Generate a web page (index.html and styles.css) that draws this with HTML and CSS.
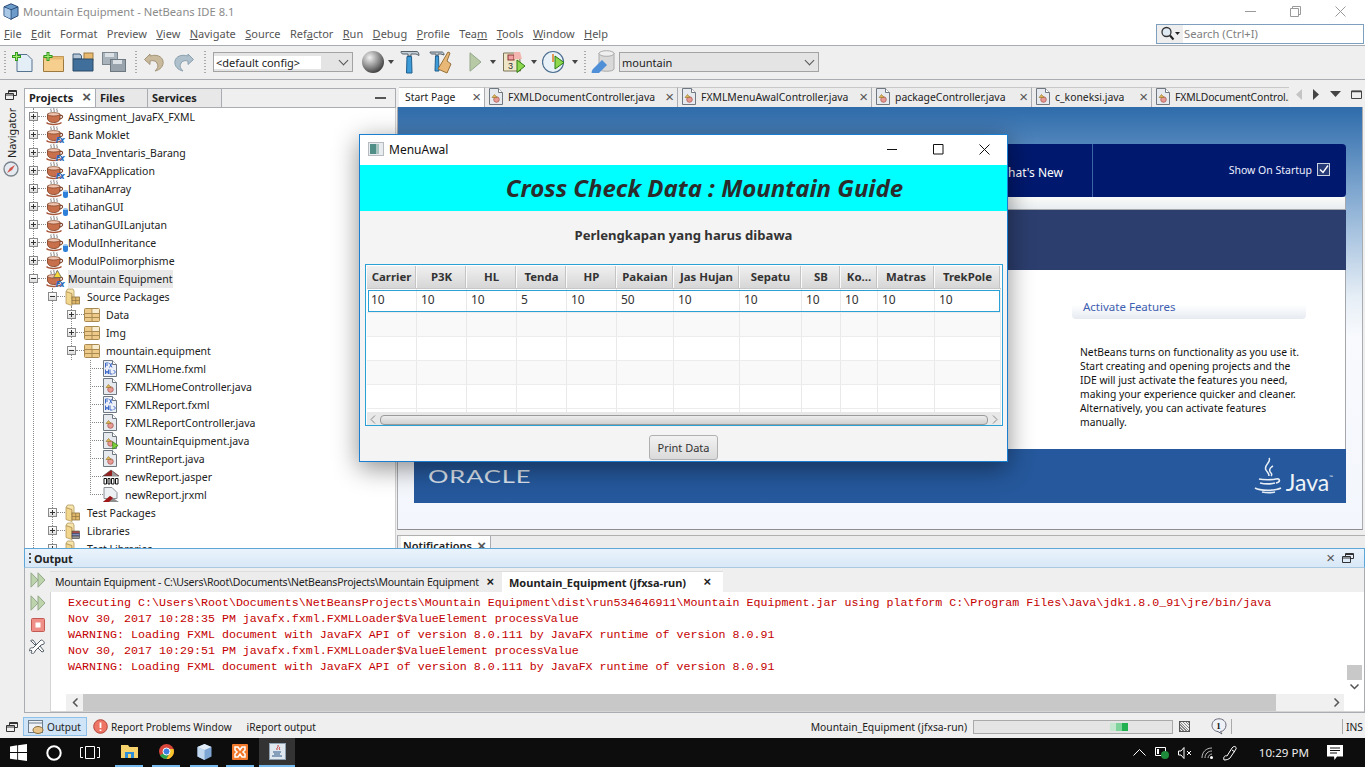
FILE: index.html
```html
<!DOCTYPE html>
<html lang="en">
<head>
  <meta charset="UTF-8" />
  <title>Mountain Equipment - NetBeans IDE 8.1</title>
  <link rel="stylesheet" href="styles.css">
</head>
<body>

  <!-- shared icons -->
  <svg class="defs" width="0" height="0" aria-hidden="true">
    <symbol id="i-cup" viewBox="0 0 18 18">
      <path d="M5 .5c-1 1 1 2 0 3.500M8 0c-1 1 1 2.500 0 4M11 .5c-1 1 1 2 0 3.500" fill="none" stroke="#6f6f6f" stroke-width=".9"/>
      <path d="M1.500 6h12.500v4c0 3-2.800 4.500-6.200 4.500S1.500 13 1.500 10z" fill="#c8704c" stroke="#7e4328" stroke-width=".9"/>
      <ellipse cx="7.700" cy="6.300" rx="6.200" ry="1.700" fill="#f0c4ae" stroke="#7e4328" stroke-width=".7"/>
      <path d="M14 7.500c2.500-.6 3.500 1.200 1.800 2.600-.8.6-1.600.9-2.600 1.200" fill="none" stroke="#7e4328" stroke-width="1.100"/>
      <path d="M.5 14.500c2 2.500 12 2.500 15 0" fill="none" stroke="#a8583a" stroke-width="1.500"/>
    </symbol>
    <symbol id="i-package" viewBox="0 0 16 16">
      <rect x=".5" y="1.500" width="15" height="13" rx="1" fill="#edc98a" stroke="#a98a50"/>
      <path d="M.5 6.500h15M.5 10.500h15M8 1.500v13" stroke="#a98a50" fill="none"/>
      <rect x="8.500" y="2" width="6.500" height="4" fill="#f8ecd0"/>
    </symbol>
    <symbol id="i-folder" viewBox="0 0 16 18">
      <path d="M1 3.500V15.500l6 2V5.500z" fill="#f2d68c" stroke="#b4975a" stroke-width=".8"/>
      <path d="M1 3.500l1.500-2.500h5.500l1 2v8H7V5.500z" fill="#f7e5ae" stroke="#b4975a" stroke-width=".8"/>
      <rect x="7" y="9" width="7.500" height="7" fill="#e0b76a" stroke="#8d7340" stroke-width=".8"/>
      <path d="M7 12.500h7.500M10.700 9v7" stroke="#8d7340" stroke-width=".7"/>
    </symbol>
    <symbol id="i-libs" viewBox="0 0 16 18">
      <path d="M1 3.500V15.500l6 2V5.500z" fill="#f2d68c" stroke="#b4975a" stroke-width=".8"/>
      <path d="M1 3.500l1.500-2.500h5.500l1 2v8H7V5.500z" fill="#f7e5ae" stroke="#b4975a" stroke-width=".8"/>
      <rect x="7" y="9" width="7.500" height="2.500" fill="#a45050" stroke="#553"  stroke-width=".6"/>
      <rect x="7" y="11.500" width="7.500" height="2.500" fill="#8090c0" stroke="#335" stroke-width=".6"/>
      <rect x="7" y="14" width="7.500" height="2.500" fill="#999" stroke="#333" stroke-width=".6"/>
    </symbol>
    <symbol id="i-java" viewBox="0 0 14 17">
      <path d="M.5.500h9l4 4v12H.5z" fill="#e6eaef" stroke="#6f7780"/>
      <path d="M9.500.500v4h4" fill="#fff" stroke="#6f7780"/>
      <circle cx="7.500" cy="11.500" r="2.800" fill="#e79a93" stroke="#a0524c" stroke-width=".7"/>
      <path d="M3 9.500l2.500-3 2.500 3z" fill="#e5b85c" stroke="#8f6f24" stroke-width=".6"/>
    </symbol>
    <symbol id="i-fxml" viewBox="0 0 14 17">
      <path d="M.5.500h9l4 4v12H.5z" fill="#edf0f6" stroke="#6f7780"/>
      <path d="M9.500.500v4h4" fill="#fff" stroke="#6f7780"/>
      <path d="M2.500 3v4.500M2.500 3h3M2.500 5h2.500M6.500 3l2.500 4.500M9 3L6.500 7.500M2.500 9.500v4.500l1.500-3 1.500 3v-4.500M7 9.500v4.500h2.500M10.500 10l2 2-2 2" fill="none" stroke="#2f5fc4" stroke-width=".9"/>
    </symbol>
    <symbol id="i-run" viewBox="0 0 8 10">
      <path d="M.8.800l6.200 4.200-6.200 4.200z" fill="#7ed03a" stroke="#2e7d12" stroke-width=".8"/>
    </symbol>
    <symbol id="i-restore" viewBox="0 0 12 10">
      <path d="M3.500 3V.500h8v5h-3M.500 3.500h8v6h-8z" fill="none" stroke="#333" stroke-width="1"/>
      <path d="M.500 5h8M3.500 1.500h8" stroke="#333" stroke-width="1"/>
    </symbol>
    <symbol id="i-ffwd" viewBox="0 0 16 16">
      <path d="M1 .800l7 7.200-7 7.200zM8 .800l7 7.200-7 7.200z" fill="#bdd3ab" stroke="#93a98a"/>
    </symbol>
  </svg>

  <!-- IDE TITLE BAR -->
  <header class="title-bar">
    <svg class="app-cube" width="16" height="17" viewBox="0 0 16 17">
      <path d="M8 .800l7 3v9l-7 3.400-7-3.400v-9z" fill="#6d9ccb" stroke="#2b4d78"/>
      <path d="M1 3.800l7 3 7-3M8 6.800v10" fill="none" stroke="#2b4d78"/>
      <path d="M1.500 4.500L7.500 7v8.800l-6-3z" fill="#a9c8e6"/>
    </svg>
    <span class="title-text">Mountain Equipment - NetBeans IDE 8.1</span>
    <div class="win-controls">
      <svg width="11" height="11" viewBox="0 0 11 11"><path d="M0 5.500h11" stroke="#9a9a9a"/></svg>
      <svg width="11" height="11" viewBox="0 0 11 11"><path d="M.5 2.500h8v8h-8zM2.500 2.500v-2h8v8h-2" fill="none" stroke="#9a9a9a"/></svg>
      <svg width="11" height="11" viewBox="0 0 11 11"><path d="M.5.500l10 10M10.500.500l-10 10" stroke="#9a9a9a"/></svg>
    </div>
  </header>

  <!-- MENU -->
  <nav class="menu-bar">
    <a class="menu-item"><u>F</u>ile</a>
    <a class="menu-item"><u>E</u>dit</a>
    <a class="menu-item">Format</a>
    <a class="menu-item">Preview</a>
    <a class="menu-item"><u>V</u>iew</a>
    <a class="menu-item"><u>N</u>avigate</a>
    <a class="menu-item"><u>S</u>ource</a>
    <a class="menu-item">Ref<u>a</u>ctor</a>
    <a class="menu-item"><u>R</u>un</a>
    <a class="menu-item"><u>D</u>ebug</a>
    <a class="menu-item"><u>P</u>rofile</a>
    <a class="menu-item">Tea<u>m</u></a>
    <a class="menu-item"><u>T</u>ools</a>
    <a class="menu-item"><u>W</u>indow</a>
    <a class="menu-item"><u>H</u>elp</a>
    <div class="quick-search">
      <span class="search-btn">
        <svg width="20" height="16" viewBox="0 0 20 16">
          <circle cx="6.500" cy="6" r="4.500" fill="#dfe9f2" stroke="#333" stroke-width="1.300"/>
          <path d="M10 9.500l3.500 4" stroke="#222" stroke-width="2"/>
          <path d="M15 6h5l-2.500 3z" fill="#222"/>
        </svg>
      </span>
      <span class="search-text">Search (Ctrl+I)</span>
    </div>
  </nav>

  <!-- TOOLBAR -->
  <div class="tool-bar">
    <span class="tb-grip"></span>
    <svg class="tb-icon" width="22" height="22" viewBox="0 0 22 22">
      <path d="M5 3.500h10l5 5v12H5z" fill="#e4eef7" stroke="#56738f"/>
      <path d="M4.500 1v9M0 5.500h9" stroke="#2f9a1e" stroke-width="3"/>
      <path d="M4.500 2v7M1 5.500h7" stroke="#a4e86e" stroke-width="1.200"/>
    </svg>
    <svg class="tb-icon" width="22" height="22" viewBox="0 0 22 22">
      <path d="M1.500 5.500h20v15h-20z" fill="#f6cf8f" stroke="#9c7a3f"/>
      <path d="M1.500 5.500h20v3h-20z" fill="#e8b970"/>
      <path d="M6 1v9M1.500 5.500h9" stroke="#2f9a1e" stroke-width="3"/>
      <path d="M6 2v7M2.500 5.500h7" stroke="#a4e86e" stroke-width="1.200"/>
    </svg>
    <svg class="tb-icon" width="22" height="22" viewBox="0 0 22 22">
      <path d="M1 8V3h7l1.500 2V8z" fill="#b5c6d6" stroke="#3f5d7a"/>
      <rect x="12" y="2" width="9" height="7" fill="#e8b970" stroke="#9c7a3f"/>
      <path d="M1 8h20v12H1z" fill="#3f6f9a" stroke="#2b4a68"/>
    </svg>
    <svg class="tb-icon tb-icon--save" width="24" height="22" viewBox="0 0 24 22">
      <rect x=".5" y="1.500" width="15" height="12" fill="#a9b3bb" stroke="#7c868e"/>
      <rect x="3" y="2" width="9" height="4" fill="#dbe1e5"/>
      <rect x="8.500" y="8.500" width="15" height="12" fill="#98a3ac" stroke="#6d7880"/>
      <rect x="11" y="9" width="9" height="4" fill="#dbe1e5"/>
    </svg>
    <span class="tb-grip"></span>
    <svg class="tb-icon" width="22" height="22" viewBox="0 0 22 22">
      <path d="M7 3L1.500 8.500 7 13.500V10c4-1 7 0 8 5-.5 2-1.500 3.500-3 5 5-1 9-5 8-10-1-4.500-6-7-13-5z" fill="#c9b99d" stroke="#a49579"/>
    </svg>
    <svg class="tb-icon" width="22" height="22" viewBox="0 0 22 22">
      <path d="M15 3l5.500 5.500L15 13.500V10c-4-1-7 0-8 5 .5 2 1.500 3.500 3 5-5-1-9-5-8-10 1-4.500 6-7 13-5z" fill="#aec0cc" stroke="#8ba0ae"/>
    </svg>
    <span class="tb-grip tb-grip--combo"></span>
    <div class="combo combo--config"><span class="combo-value">&lt;default config&gt;</span><span class="combo-arrow"></span></div>
    <svg class="tb-globe" width="27" height="26" viewBox="0 0 27 26">
      <defs><radialGradient id="globe-fill" cx=".35" cy=".3" r=".8"><stop offset="0" stop-color="#f2f2f2"/><stop offset=".55" stop-color="#8a8a8a"/><stop offset="1" stop-color="#2f2f2f"/></radialGradient></defs>
      <circle cx="12" cy="13" r="11" fill="url(#globe-fill)"/>
    </svg>
    <span class="tb-drop"></span>
    <svg class="tb-icon tb-icon--hammer" width="20" height="26" viewBox="0 0 20 26">
      <path d="M1 2.500h16c1 0 2 2 2 4l-3-1.500H11v2H8V5H3c-1.500 0-2-1.500-2-2.500z" fill="#c4cdd3" stroke="#56636c"/>
      <path d="M7 7.500h4.500L12 24H6.500z" fill="#3d9bd8" stroke="#1f5f8f"/>
    </svg>
    <svg class="tb-icon tb-icon--clean" width="25" height="26" viewBox="0 0 25 26">
      <path d="M1 3h12c1 0 2 1 2 3l-3-1H9v2H7V5H3C2 5 1 4 1 3z" fill="#c4cdd3" stroke="#56636c"/>
      <path d="M6.500 7h3l.5 15H6z" fill="#3d9bd8" stroke="#1f5f8f"/>
      <path d="M19 3l2 1-3 8 4 3-4 9-9-4 3-5z" fill="#e9b877" stroke="#97703a"/>
    </svg>
    <svg class="tb-icon tb-icon--run" width="13" height="20" viewBox="0 0 13 20">
      <path d="M1 .800l11 9.200-11 9.200z" fill="#b8c9a6" stroke="#94a88a"/>
    </svg>
    <span class="tb-drop"></span>
    <svg class="tb-icon tb-icon--debug" width="23" height="24" viewBox="0 0 23 24">
      <path d="M.5 3h16l1 18H.5z" fill="#efe6c8" stroke="#7b7558"/>
      <rect x="5" y="5" width="6" height="5" fill="#f0a0a0" stroke="#833"/>
      <text class="tb-three" x="5" y="19">3</text>
      <path d="M11 2h6l2 7h-8z" fill="#f3b5b0"/>
      <path d="M14 10l8 6-8 6.500z" fill="#8ed850" stroke="#2e7d12"/>
    </svg>
    <span class="tb-drop"></span>
    <svg class="tb-icon tb-icon--profile" width="23" height="24" viewBox="0 0 23 24">
      <circle cx="11" cy="12" r="10.500" fill="#e8f0f8" stroke="#4b6d8f" stroke-width="1.200"/>
      <path d="M11 4v8" stroke="#e07b20" stroke-width="1.500"/>
      <path d="M13 6l9 6.500-9 6.500z" fill="#8ed850" stroke="#2e7d12"/>
    </svg>
    <span class="tb-drop"></span>
    <span class="tb-grip tb-grip--db"></span>
    <svg class="tb-icon tb-icon--db" width="24" height="24" viewBox="0 0 24 24">
      <path d="M8 3v16c0 3 15 3 15 0V3z" fill="#d9d9d9" stroke="#aaa"/>
      <ellipse cx="15.500" cy="3.500" rx="7.500" ry="2.800" fill="#efefef" stroke="#aaa"/>
      <path d="M11 10l5 5-8 8-7 0c-1 0 0-3 1-4l5-5z" fill="#4f8fd8"/>
    </svg>
    <div class="combo combo--db"><span class="combo-value">mountain</span><span class="combo-arrow"></span></div>
  </div>

  <!-- WORKSPACE -->
  <main class="workspace">

    <aside class="nav-strip">
      <svg width="12" height="10"><use href="#i-restore"/></svg>
      <span class="nav-strip-label">Navigator</span>
      <svg class="nav-compass" width="16" height="16" viewBox="0 0 16 16">
        <circle cx="8" cy="8" r="7" fill="#e4eaf0" stroke="#7a838c" stroke-width="1.300"/>
        <path d="M4 12l3-5 5-3-3 5z" fill="#d2554a"/>
      </svg>
    </aside>

    <section class="projects">
      <div class="view-tabs">
        <span class="view-tab view-tab--active">Projects <i class="close-x">&times;</i></span>
        <span class="view-tab view-tab--files">Files</span>
        <span class="view-tab view-tab--services">Services</span>
        <span class="view-min"></span>
      </div>
      <div class="tree">
        <span class="guide guide-1"></span>
        <span class="guide guide-2"></span>
        <span class="guide guide-3"></span>
        <span class="guide guide-4"></span>

        <div class="row l1"><span class="exp"></span><span class="conn"></span><span class="ico"><svg width="18" height="18"><use href="#i-cup"/></svg></span>Assingment_JavaFX_FXML</div>
        <div class="row l1"><span class="exp"></span><span class="conn"></span><span class="ico"><svg width="18" height="18"><use href="#i-cup"/></svg><b class="fx">Fx</b></span>Bank Moklet</div>
        <div class="row l1"><span class="exp"></span><span class="conn"></span><span class="ico"><svg width="18" height="18"><use href="#i-cup"/></svg><b class="fx">Fx</b></span>Data_Inventaris_Barang</div>
        <div class="row l1"><span class="exp"></span><span class="conn"></span><span class="ico"><svg width="18" height="18"><use href="#i-cup"/></svg><b class="fx">Fx</b></span>JavaFXApplication</div>
        <div class="row l1"><span class="exp"></span><span class="conn"></span><span class="ico"><svg width="18" height="18"><use href="#i-cup"/></svg><i class="can"></i></span>LatihanArray</div>
        <div class="row l1"><span class="exp"></span><span class="conn"></span><span class="ico"><svg width="18" height="18"><use href="#i-cup"/></svg><i class="can"></i></span>LatihanGUI</div>
        <div class="row l1"><span class="exp"></span><span class="conn"></span><span class="ico"><svg width="18" height="18"><use href="#i-cup"/></svg></span>LatihanGUILanjutan</div>
        <div class="row l1"><span class="exp"></span><span class="conn"></span><span class="ico"><svg width="18" height="18"><use href="#i-cup"/></svg><i class="can"></i></span>ModulInheritance</div>
        <div class="row l1"><span class="exp"></span><span class="conn"></span><span class="ico"><svg width="18" height="18"><use href="#i-cup"/></svg></span>ModulPolimorphisme</div>
        <div class="row l1"><span class="exp exp--open"></span><span class="conn"></span><span class="ico"><svg width="18" height="18"><use href="#i-cup"/></svg><b class="fx">Fx</b><svg class="warn" width="9" height="8" viewBox="0 0 9 8"><path d="M4.500.500l4 7h-8z" fill="#f6d73c" stroke="#555" stroke-width=".7"/></svg></span><span class="selected">Mountain Equipment</span></div>
        <div class="row l2"><span class="exp exp--open"></span><span class="conn"></span><span class="ico"><svg width="16" height="18"><use href="#i-folder"/></svg></span>Source Packages</div>
        <div class="row l3"><span class="exp"></span><span class="conn"></span><span class="ico"><svg width="16" height="16"><use href="#i-package"/></svg></span>Data</div>
        <div class="row l3"><span class="exp"></span><span class="conn"></span><span class="ico"><svg width="16" height="16"><use href="#i-package"/></svg></span>Img</div>
        <div class="row l3"><span class="exp exp--open"></span><span class="conn"></span><span class="ico"><svg width="16" height="16"><use href="#i-package"/></svg></span>mountain.equipment</div>
        <div class="row l4"><span class="conn"></span><span class="ico"><svg width="14" height="17"><use href="#i-fxml"/></svg></span>FXMLHome.fxml</div>
        <div class="row l4"><span class="conn"></span><span class="ico"><svg width="14" height="17"><use href="#i-java"/></svg></span>FXMLHomeController.java</div>
        <div class="row l4"><span class="conn"></span><span class="ico"><svg width="14" height="17"><use href="#i-fxml"/></svg></span>FXMLReport.fxml</div>
        <div class="row l4"><span class="conn"></span><span class="ico"><svg width="14" height="17"><use href="#i-java"/></svg></span>FXMLReportController.java</div>
        <div class="row l4"><span class="conn"></span><span class="ico"><svg width="14" height="17"><use href="#i-java"/></svg><svg class="run-badge" width="7" height="9"><use href="#i-run"/></svg></span>MountainEquipment.java</div>
        <div class="row l4"><span class="conn"></span><span class="ico"><svg width="14" height="17"><use href="#i-java"/></svg></span>PrintReport.java</div>
        <div class="row l4"><span class="conn"></span><span class="ico">
          <svg width="16" height="16" viewBox="0 0 16 16"><path d="M0 7L8 1l8 6z" fill="#9a2020" stroke="#444" stroke-width=".6"/><path d="M9 2l6 5H9z" fill="#999"/><path d="M1 9.500h2.500V15H1zM5 9.500h2V15H5zM8.500 9.500h2.500V15H8.500zM12.500 9.500H15V15h-2.500z" fill="#fff" stroke="#111"/></svg>
        </span>newReport.jasper</div>
        <div class="row l4"><span class="conn"></span><span class="ico">
          <svg width="16" height="16" viewBox="0 0 16 16"><path d="M1 .500h8l5 5v6H1z" fill="#eef1f4" stroke="#8a8f94"/><path d="M0 15l7-6 3 2 6 4z" fill="#8e8e8e"/><path d="M0 15l7-6 3 2-4 4z" fill="#a01818"/></svg>
        </span>newReport.jrxml</div>
        <div class="row l2"><span class="exp"></span><span class="conn"></span><span class="ico"><svg width="16" height="18"><use href="#i-folder"/></svg></span>Test Packages</div>
        <div class="row l2"><span class="exp"></span><span class="conn"></span><span class="ico"><svg width="16" height="18"><use href="#i-libs"/></svg></span>Libraries</div>
        <div class="row l2"><span class="exp"></span><span class="conn"></span><span class="ico"><svg width="16" height="18"><use href="#i-libs"/></svg></span>Test Libraries</div>
      </div>
    </section>

    <section class="editor">
      <div class="doc-tabs">
        <span class="doc-tab doc-tab--start">Start Page<i class="close-x">&times;</i></span>
        <span class="doc-tab doc-tab--a"><svg width="14" height="17"><use href="#i-java"/></svg>FXMLDocumentController.java<i class="close-x">&times;</i></span>
        <span class="doc-tab doc-tab--b"><svg width="14" height="17"><use href="#i-java"/></svg>FXMLMenuAwalController.java<i class="close-x">&times;</i></span>
        <span class="doc-tab doc-tab--c"><svg width="14" height="17"><use href="#i-java"/></svg>packageController.java<i class="close-x">&times;</i></span>
        <span class="doc-tab doc-tab--d"><svg width="14" height="17"><use href="#i-java"/></svg>c_koneksi.java<i class="close-x">&times;</i></span>
        <span class="doc-tab doc-tab--e"><svg width="14" height="17"><use href="#i-java"/></svg>FXMLDocumentControl..</span>
        <div class="doc-nav">
          <svg width="7" height="11" viewBox="0 0 7 11"><path d="M6 0v11L0 5.500z" fill="#c4c4c4"/></svg>
          <svg width="7" height="11" viewBox="0 0 7 11"><path d="M0 0v11l6-5.500z" fill="#444"/></svg>
          <svg width="11" height="7" viewBox="0 0 11 7"><path d="M0 0h11L5.500 6z" fill="#444"/></svg>
          <svg width="11" height="9" viewBox="0 0 11 9"><path d="M.5 1h10v7.500H.5z" fill="none" stroke="#444"/><path d="M.5 1.500h10" stroke="#444" stroke-width="1.500"/></svg>
        </div>
      </div>

      <div class="start-page">
        <div class="sp-nav">
          <div class="sp-nav-tabs"><span>What's New</span></div>
          <label class="sp-startup">Show On Startup <span class="sp-check">
            <svg width="10" height="9" viewBox="0 0 10 9"><path d="M1 4.500l3 3 5-7" fill="none" stroke="#fff" stroke-width="1.400"/></svg>
          </span></label>
        </div>
        <div class="sp-strip"></div>
        <div class="sp-band"></div>
        <div class="sp-content">
          <div class="sp-feature">
            <h4 class="sp-feature-title">Activate Features</h4>
            <p class="sp-feature-text">NetBeans turns on functionality as you use it.<br>Start creating and opening projects and the<br>IDE will just activate the features you need,<br>making your experience quicker and cleaner.<br>Alternatively, you can activate features<br>manually.</p>
          </div>
        </div>
        <div class="sp-footer">
          <span class="oracle">ORACLE</span>
          <div class="java-logo">
            <svg width="28" height="38" viewBox="0 0 28 38">
              <path d="M15 1c3 4-6 7-3 12 1 2 3 3 3 6M19 9c-4 2-4 5-2 7 1 1 1 2 0 3" fill="none" stroke="#e6edf5" stroke-width="1.500"/>
              <path d="M5 22c4 1 13 1 17 0M6 26c4 1 11 1 15 0M22 22c4-1 5 3 0 4M1 31c5 3 20 3 26 0M8 35c5 1 9 1 13 0" fill="none" stroke="#e6edf5" stroke-width="1.700"/>
            </svg>
            <span class="java-word">Java<sup>™</sup></span>
          </div>
        </div>
      </div>

      <div class="notif-strip">
        <span class="notif-tab">Notifications <i class="close-x">&times;</i></span>
      </div>
    </section>
  </main>

  <!-- OUTPUT -->
  <section class="output">
    <div class="output-head">
      <span class="grip"></span>
      <strong>Output</strong>
      <div class="output-head-btns">
        <i class="close-x">&times;</i>
        <svg width="12" height="10"><use href="#i-restore"/></svg>
      </div>
    </div>
    <div class="output-body">
      <div class="output-actions">
        <svg width="16" height="16"><use href="#i-ffwd"/></svg>
        <svg width="16" height="16"><use href="#i-ffwd"/></svg>
        <svg width="14" height="14" viewBox="0 0 14 14"><rect x=".5" y=".5" width="13" height="13" rx="1" fill="#ef8f88" stroke="#c05a52"/><rect x="4.500" y="4.500" width="5" height="5" fill="#fff"/></svg>
        <svg width="17" height="16" viewBox="0 0 17 16"><path d="M2 2l4 4 1-1-3-4c-2 0-3 1-2 1zM9 9l4 4 2-1-4-5zM12 1c2 0 4 2 3 4l-3 1-6 6c0 2-2 3-4 2l1-2-1-1-2 1c0-2 2-4 4-3l6-6z" fill="#fff" stroke="#55606a"/></svg>
      </div>
      <div class="output-main">
        <div class="out-tabs">
          <span class="out-tab"><span class="out-tab-path">Mountain Equipment - C:\Users\Root\Documents\NetBeansProjects\Mountain Equipment</span> <i class="close-x close-x--bold">&times;</i></span>
          <span class="out-tab out-tab--active">Mountain_Equipment (jfxsa-run) <i class="close-x close-x--bold">&times;</i></span>
        </div>
        <div class="console">
          <pre class="console-text">Executing C:\Users\Root\Documents\NetBeansProjects\Mountain Equipment\dist\run534646911\Mountain Equipment.jar using platform C:\Program Files\Java\jdk1.8.0_91\jre/bin/java
Nov 30, 2017 10:28:35 PM javafx.fxml.FXMLLoader$ValueElement processValue
WARNING: Loading FXML document with JavaFX API of version 8.0.111 by JavaFX runtime of version 8.0.91
Nov 30, 2017 10:29:51 PM javafx.fxml.FXMLLoader$ValueElement processValue
WARNING: Loading FXML document with JavaFX API of version 8.0.111 by JavaFX runtime of version 8.0.91</pre>
          <div class="vscroll">
            <span class="vscroll-thumb"></span>
            <svg class="chev" width="9" height="6" viewBox="0 0 9 6"><path d="M.5.500l4 4 4-4" fill="none" stroke="#555" stroke-width="1.500"/></svg>
          </div>
          <div class="hscroll">
            <svg class="chev" width="6" height="9" viewBox="0 0 6 9"><path d="M5.500.500l-4 4 4 4" fill="none" stroke="#555" stroke-width="1.500"/></svg>
            <span class="hscroll-track"><span class="hscroll-thumb"></span></span>
            <svg class="chev" width="6" height="9" viewBox="0 0 6 9"><path d="M.5.500l4 4-4 4" fill="none" stroke="#555" stroke-width="1.500"/></svg>
          </div>
        </div>
      </div>
    </div>
  </section>

  <!-- STATUS -->
  <footer class="status-bar">
    <svg class="status-restore" width="12" height="10"><use href="#i-restore"/></svg>
    <span class="dock-btn dock-btn--on">
      <svg width="16" height="16" viewBox="0 0 16 16"><rect x=".5" y="1.500" width="14" height="12" fill="#eef2f6" stroke="#6b7c8c"/><path d="M.5 4h14" stroke="#6b7c8c"/><ellipse cx="10" cy="11" rx="5" ry="3.500" fill="#e6c48a" stroke="#8a6a3a"/></svg>
      Output
    </span>
    <span class="dock-btn">
      <svg width="15" height="15" viewBox="0 0 15 15"><circle cx="7.500" cy="7.500" r="6.800" fill="#ee7466" stroke="#b2453a"/><path d="M7.500 3.500v5.500M7.500 10.500v1.500" stroke="#fff" stroke-width="1.800"/></svg>
      Report Problems Window
    </span>
    <span class="dock-btn dock-btn--plain">iReport output</span>
    <div class="status-right">
      <span class="task-name">Mountain_Equipment (jfxsa-run)</span>
      <span class="progress"><i class="p1"></i><i class="p2"></i><i class="p3"></i></span>
      <span class="progress-stop"></span>
      <svg class="bubble" width="16" height="17" viewBox="0 0 16 17"><path d="M8 .800c4 0 7 2.700 7 6.400 0 3.500-2.500 6-5.500 6.400L11 16l-4-2.400C3.500 13.200 1 10.700 1 7.200 1 3.500 4 .800 8 .800z" fill="#eef2f6" stroke="#667"/><text class="bubble-num" x="5.200" y="11">1</text></svg>
      <span class="status-sep"></span>
      <span class="status-sep status-sep--ins"></span>
      <span class="ins">INS</span>
    </div>
  </footer>

  <!-- WINDOWS TASKBAR -->
  <div class="taskbar">
    <svg class="tk-start" width="17" height="17" viewBox="0 0 17 17"><path d="M0 2.400L7.200 1.300v6.800H0zM8.100 1.200L17 0v8.100H8.100zM0 9h7.200v6.800L0 14.700zM8.100 9H17v8L8.100 15.800z" fill="#fff"/></svg>
    <svg class="tk-cortana" width="16" height="16" viewBox="0 0 16 16"><circle cx="8" cy="8" r="6.700" fill="none" stroke="#fff" stroke-width="2"/></svg>
    <svg class="tk-view" width="20" height="13" viewBox="0 0 20 13"><path d="M5.500.500h9v12h-9zM3 1.500H.500v10H3M17 1.500h2.500v10H17" fill="none" stroke="#fff"/></svg>
    <span class="tk-app tk-app--run tk-app--explorer">
      <svg width="17" height="15" viewBox="0 0 17 15"><path d="M0 1h7l1.500 2H17v11H0z" fill="#f6d36c"/><path d="M4 8h9v6H4z" fill="#2f8fd8"/><path d="M7 10h3v4H7z" fill="#f6d36c"/></svg>
    </span>
    <span class="tk-app tk-app--run tk-app--chrome">
      <svg width="15" height="15" viewBox="0 0 15 15"><circle cx="7.500" cy="7.500" r="7.500" fill="#d8453a"/><path d="M7.500 7.500L1 11.200A7.500 7.500 0 0 0 7.500 15L11 8z" fill="#2ea54f"/><path d="M7.500 15A7.500 7.500 0 0 0 14.500 5H7.500L11 9z" fill="#f6c52c"/><circle cx="7.500" cy="7.500" r="3.500" fill="#3d7fe0" stroke="#fff"/></svg>
    </span>
    <span class="tk-app tk-app--run tk-app--cube">
      <svg width="15" height="16" viewBox="0 0 15 16"><path d="M7.500 0l7 3v9.500l-7 3.500-7-3.500V3z" fill="#7ea6d4"/><path d="M.5 3l7 3v10l-7-3.500z" fill="#c2d8ef"/><path d="M.5 3l7-3 7 3-7 3z" fill="#e3eef9"/></svg>
    </span>
    <span class="tk-app tk-app--run tk-app--xampp">
      <svg width="16" height="16" viewBox="0 0 16 16"><rect width="16" height="16" rx="1" fill="#f0792c"/><path d="M3 3h3l2 3 2-3h3v3l-2 2 2 2v3h-3l-2-3-2 3H3v-3l2-2-2-2z" fill="none" stroke="#fff" stroke-width="1.500"/></svg>
    </span>
    <span class="tk-app tk-app--active">
      <svg width="17" height="17" viewBox="0 0 17 17"><rect x=".5" y=".5" width="16" height="16" fill="#dfe7ef" stroke="#8fa0b0"/><path d="M9 2c1 2-2 3-1 5M11 4c-1 1-1 2 0 3" fill="none" stroke="#c7332c"/><path d="M4 9h8M5 11h6M3 13h10" stroke="#2f5a8a"/></svg>
    </span>
    <div class="tray">
      <svg width="13" height="7" viewBox="0 0 13 7"><path d="M.5 6.500l6-6 6 6" fill="none" stroke="#fff"/></svg>
      <svg width="14" height="13" viewBox="0 0 14 13"><path d="M.5 1.500h10v8H.5z" fill="none" stroke="#fff"/><rect x="2" y="3" width="2" height="5" fill="#fff"/><circle cx="10" cy="9" r="4" fill="#1e8c3a"/></svg>
      <svg width="14" height="12" viewBox="0 0 14 12"><path d="M.5 4h2.500l3-3.500v11L3 8H.5zM9 4l4 4M13 4L9 8" fill="none" stroke="#fff"/></svg>
      <svg width="13" height="12" viewBox="0 0 13 12"><path d="M1 11c0-6 4-10 10-10M4 11c0-4 3-7 7-7M7 11c0-2 2-4 4-4" fill="none" stroke="#bbb"/><circle cx="10.500" cy="10.500" r="1.500" fill="#fff"/></svg>
      <svg width="15" height="16" viewBox="0 0 15 16"><path d="M1 15c-1-3 1-5 3-4l5-8c2-3 5-1 4 1l-6 9c-1 1-3 2-6 2zM9 5l3 2" fill="none" stroke="#fff"/></svg>
      <span class="tray-time">10:29 PM</span>
      <svg class="tray-note" width="16" height="15" viewBox="0 0 16 15"><path d="M0 0h16v11.500h-6L7.500 15l-.5-3.500H0z" fill="#fff"/><path d="M3 3h10M3 5.500h10M3 8h7" stroke="#111"/></svg>
    </div>
  </div>

  <!-- RUNNING APP WINDOW -->
  <div class="dialog">
    <div class="dlg-title">
      <svg width="16" height="14" viewBox="0 0 16 14"><rect x=".5" y=".5" width="15" height="13" fill="#e8ecef" stroke="#b5bbc0"/><rect x="2" y="2" width="6" height="10" fill="#4f8f88"/><rect x="8" y="2" width="3" height="10" fill="#a8c4c0"/></svg>
      <span class="dlg-title-text">MenuAwal</span>
      <div class="dlg-controls">
        <svg width="11" height="11" viewBox="0 0 11 11"><path d="M0 5.500h10" stroke="#111"/></svg>
        <svg width="11" height="11" viewBox="0 0 11 11"><path d="M.5.500h9.500v9.500H.5z" fill="none" stroke="#111"/></svg>
        <svg width="11" height="11" viewBox="0 0 11 11"><path d="M.5.500l10 10M10.500.500l-10 10" stroke="#111"/></svg>
      </div>
    </div>
    <h1 class="dlg-banner">Cross Check Data : Mountain Guide</h1>
    <h2 class="dlg-sub">Perlengkapan yang harus dibawa</h2>
    <div class="tv">
      <div class="tv-row tv-head">
        <span>Carrier</span><span>P3K</span><span>HL</span><span>Tenda</span><span>HP</span><span>Pakaian</span><span>Jas Hujan</span><span>Sepatu</span><span>SB</span><span>Ko...</span><span>Matras</span><span>TrekPole</span>
      </div>
      <div class="tv-row tv-data tv-focus">
        <span>10</span><span>10</span><span>10</span><span>5</span><span>10</span><span>50</span><span>10</span><span>10</span><span>10</span><span>10</span><span>10</span><span>10</span>
      </div>
      <div class="tv-row tv-data tv-odd"><span></span><span></span><span></span><span></span><span></span><span></span><span></span><span></span><span></span><span></span><span></span><span></span></div>
      <div class="tv-row tv-data"><span></span><span></span><span></span><span></span><span></span><span></span><span></span><span></span><span></span><span></span><span></span><span></span></div>
      <div class="tv-row tv-data tv-odd"><span></span><span></span><span></span><span></span><span></span><span></span><span></span><span></span><span></span><span></span><span></span><span></span></div>
      <div class="tv-row tv-data"><span></span><span></span><span></span><span></span><span></span><span></span><span></span><span></span><span></span><span></span><span></span><span></span></div>
      <div class="tv-row tv-data tv-stub"><span></span><span></span><span></span><span></span><span></span><span></span><span></span><span></span><span></span><span></span><span></span><span></span></div>
      <div class="tv-scroll">
        <svg width="6" height="9" viewBox="0 0 6 9"><path d="M5 .5l-4 4 4 4" fill="none" stroke="#888"/></svg>
        <span class="tv-thumb"></span>
        <svg width="6" height="9" viewBox="0 0 6 9"><path d="M1 .5l4 4-4 4" fill="none" stroke="#888"/></svg>
      </div>
    </div>
    <div class="dlg-actions"><button class="fx-btn">Print Data</button></div>
  </div>

</body>
</html>
```

FILE: styles.css
```css
* {
  box-sizing: border-box;
}
html, body {
  margin: 0;
  height: 100%;
}
body {
  position: relative;
  width: 1365px;
  height: 767px;
  overflow: hidden;
  display: flex;
  flex-direction: column;
  background: #efefef;
  font-family: "Noto Sans", sans-serif;
  font-size: 10.5px;
  color: #222;
}
.defs {
  position: absolute;
}
svg {
  display: block;
  flex: none;
}
.close-x {
  font-style: normal;
  font-size: 15px;
  line-height: 10px;
  color: #555;
  font-family: "Liberation Sans", sans-serif;
}

/* title + menu */
.title-bar {
  height: 22px;
  flex: none;
  display: flex;
  align-items: center;
  background: #fff;
  padding-left: 3px;
}
.title-text {
  margin-left: 4px;
  font-size: 11.2px;
  color: #8b8b8b;
}
.win-controls {
  margin-left: auto;
  display: flex;
  gap: 34px;
  padding-right: 19px;
}
.menu-bar {
  height: 24px;
  flex: none;
  display: flex;
  align-items: center;
  gap: 9.4px;
  padding: 0 1px 0 4px;
  background: #fff;
  border-bottom: 1px solid #a9adb1;
}
.menu-item {
  font-size: 11px;
  color: #555;
}
.quick-search {
  margin-left: auto;
  width: 208px;
  height: 20px;
  display: flex;
  align-items: center;
  border: 1px solid #7f9fbf;
  background: #fff;
}
.search-btn {
  width: 26px;
  height: 18px;
  display: flex;
  align-items: center;
  padding-left: 3px;
  background: #eee;
}
.search-text {
  margin-left: 1px;
  font-size: 11.2px;
  color: #808080;
}

/* toolbar */
.tool-bar {
  height: 34px;
  flex: none;
  display: flex;
  align-items: center;
  padding: 0 0 1px 4px;
  background: #efefef;
  border-bottom: 1px solid #a9adb1;
}
.tb-grip {
  width: 2px;
  height: 22px;
  margin-right: 2px;
  background: repeating-linear-gradient(#aaa 0 1px, transparent 1px 3px);
}
.tb-icon {
  margin: 0 4px;
}
.tb-icon--save {
  margin: 0 9px 0 4px;
}
.tb-grip--combo {
  margin: 0 7px 0 5px;
}
.tb-grip--db {
  margin: 0 5px 0 6px;
}
.tb-icon--hammer {
  margin: 0 9px 0 6px;
}
.tb-icon--clean {
  margin: 0 15px 0 0;
}
.tb-icon--run {
  margin: 0 8px 0 0;
}
.tb-icon--debug {
  margin: 0 5px 0 7px;
}
.tb-icon--profile {
  margin: 0 7px 0 5px;
}
.tb-icon--db {
  margin: 0 4px 0 0;
}
.tb-globe {
  margin-left: 8px;
}
.tb-drop {
  width: 0;
  height: 0;
  border: 3.500px solid transparent;
  border-top: 4px solid #444;
  border-bottom: 0;
}
.tb-three {
  font-size: 9px;
  font-family: "Liberation Sans", sans-serif;
  fill: #333;
}
.combo {
  height: 20px;
  display: flex;
  align-items: center;
  border: 1px solid #a3a3a3;
  background: #e4e4e4;
  font-size: 11px;
  color: #222;
  position: relative;
}
.combo-value {
  flex: 1;
  padding-left: 2px;
}
.combo--config {
  width: 140px;
}
.combo--config .combo-value {
  height: 13px;
  line-height: 13px;
  margin-right: 19px;
  background: #fff;
}
.combo--db {
  width: 200px;
}
.combo-arrow {
  width: 7px;
  height: 7px;
  margin: 0 5px 4px 0;
  border-right: 1px solid #555;
  border-bottom: 1px solid #555;
  transform: rotate(45deg);
}

/* workspace */
.workspace {
  height: 468px;
  flex: none;
  display: flex;
}
.nav-strip {
  width: 24px;
  flex: none;
  display: flex;
  flex-direction: column;
  align-items: center;
  padding: 10px 2px 0 0;
  gap: 8px;
}
.nav-strip-label {
  writing-mode: vertical-rl;
  transform: rotate(180deg);
  font-size: 10.8px;
  height: 46px;
  margin-top: 4px;
}
.nav-compass {
  margin-top: -5px;
}
.projects {
  width: 372px;
  flex: none;
  display: flex;
  flex-direction: column;
  border-left: 1px solid #a9adb1;
  margin-top: 8px;
}
.view-tabs {
  height: 20px;
  flex: none;
  display: flex;
  background: #efefef;
  border-top: 1px solid #a9adb1;
  border-bottom: 1px solid #a9adb1;
  border-right: 1px solid #a9adb1;
}
.view-tab {
  display: flex;
  align-items: center;
  justify-content: space-between;
  padding: 0 4px 2px;
  font-weight: 700;
  font-size: 11px;
  color: #222;
  border-right: 1px solid #a9adb1;
  background: #e8e8e8;
}
.view-tab--active {
  width: 71px;
  background: #fff;
}
.view-tab--files {
  width: 52px;
}
.view-tab--services {
  width: 74px;
}
.view-min {
  margin: 8px 9px 0 auto;
  width: 11px;
  height: 2px;
  background: #555;
}
.tree {
  position: relative;
  flex: 1;
  overflow: hidden;
  background: #fff;
  border-right: 1px solid #d0d0d0;
}
.guide {
  position: absolute;
  border-left: 1px dotted #888;
}
.guide-1 {
  left: 8px;
  top: 0;
  bottom: 0;
}
.guide-2 {
  left: 27px;
  top: 180px;
  bottom: 0;
}
.guide-3 {
  left: 46px;
  top: 198px;
  height: 54px;
}
.guide-4 {
  left: 65px;
  top: 252px;
  height: 135px;
}
.row {
  position: relative;
  height: 18px;
  display: flex;
  align-items: center;
  padding-bottom: 1px;
  font-size: 10.5px;
  white-space: nowrap;
}
.l1 {
  padding-left: 4px;
}
.l2 {
  padding-left: 23px;
}
.l3 {
  padding-left: 42px;
}
.l4 {
  padding-left: 65px;
}
.exp {
  position: relative;
  width: 9px;
  height: 9px;
  flex: none;
  border: 1px solid #8a8a8a;
  background: linear-gradient(#fff, #dcdcdc);
}
.exp::before, .exp::after {
  content: "";
  position: absolute;
  background: #333;
}
.exp::before {
  left: 1px;
  top: 3px;
  width: 5px;
  height: 1px;
}
.exp::after {
  left: 3px;
  top: 1px;
  width: 1px;
  height: 5px;
}
.exp--open::after {
  display: none;
}
.conn {
  width: 8px;
  flex: none;
  border-top: 1px dotted #888;
}
.l4 .conn {
  width: 13px;
}
.ico {
  position: relative;
  width: 18px;
  height: 18px;
  flex: none;
  margin-right: 4px;
  display: flex;
  align-items: center;
}
.fx {
  position: absolute;
  right: 0;
  bottom: 0;
  font-size: 9px;
  line-height: 8px;
  letter-spacing: -.5px;
  font-style: italic;
  color: #2466b8;
}
.can {
  position: absolute;
  right: -4px;
  bottom: 0;
  width: 5px;
  height: 8px;
  border-radius: 2px;
  background: #2f80d8;
  border-top: 2px solid #9cc6f0;
}
.warn {
  position: absolute;
  right: 2px;
  top: 0;
}
.run-badge {
  position: absolute;
  right: 2px;
  bottom: 0;
}
.selected {
  background: #e8e8e8;
  line-height: 18px;
  padding-right: 1px;
}

/* editor */
.editor {
  flex: 1;
  min-width: 0;
  margin-left: 1px;
  display: flex;
  flex-direction: column;
  padding-top: 7px;
}
.doc-tabs {
  height: 20px;
  flex: none;
  display: flex;
  padding-left: 2px;
}
.doc-tab {
  flex: none;
  display: flex;
  align-items: center;
  gap: 5px;
  padding: 0 0 2px 4px;
  font-size: 10.4px;
  background: #ececec;
  border-right: 1px solid #a9adb1;
  border-top: 1px solid #c8c8c8;
  white-space: nowrap;
  overflow: hidden;
}
.doc-tab .close-x {
  margin-left: auto;
  margin-right: 3px;
}
.doc-tab--start {
  width: 86px;
  background: #fff;
  padding-left: 6px;
}
.doc-tab--a {
  width: 193px;
}
.doc-tab--b {
  width: 194px;
}
.doc-tab--c {
  width: 160px;
}
.doc-tab--d {
  width: 120px;
}
.doc-tab--e {
  width: 137px;
  border-right: 0;
  letter-spacing: -.15px;
}
.doc-nav {
  flex: 1;
  min-width: 0;
  display: flex;
  align-items: center;
  gap: 10px;
  padding: 0 3px 5px 7px;
}
.start-page {
  height: 423px;
  flex: none;
  margin-right: 2px;
  display: flex;
  flex-direction: column;
  padding: 37px 16px 27px;
  border-left: 1px solid #a9adb1;
  border-right: 1px solid #a9adb1;
  border-bottom: 1px solid #8e8e8e;
  background: linear-gradient(#2f6cab 0, #4a80b8 30px, #85abd2 90px, #e6eef6 190px, #f8fafd 230px, #f3f6fc 100%);
}
.sp-nav {
  height: 53px;
  flex: none;
  display: flex;
  background: #00196e;
  border-radius: 0 4px 4px 0;
  color: #fff;
}
.sp-nav-tabs {
  width: 679px;
  display: flex;
  align-items: center;
  justify-content: flex-end;
  padding: 4px 29px 0 0;
  font-size: 12px;
  border-right: 1px solid #3c66a8;
}
.sp-startup {
  flex: 1;
  display: flex;
  align-items: center;
  justify-content: flex-end;
  gap: 5px;
  padding: 0 16px 2px 0;
  font-size: 10.5px;
  color: #eef;
}
.sp-check {
  width: 13px;
  height: 13px;
  display: flex;
  align-items: center;
  justify-content: center;
  border: 1px solid #c9d2e0;
  background: #263a78;
}
.sp-strip {
  height: 13px;
  flex: none;
  background: linear-gradient(#fafcf9, #e9edf0);
  border-bottom: 1px solid #a4a8ac;
  border-right: 1px solid #a4a8ac;
}
.sp-band {
  height: 60px;
  flex: none;
  background: #2c3e6e;
}
.sp-content {
  height: 179px;
  flex: none;
  display: flex;
  justify-content: flex-end;
  background: #fff;
  padding: 25px 39px 0 0;
  border-right: 1px solid #a4a8ac;
}
.sp-feature {
  width: 234px;
}
.sp-feature-title {
  margin: 0;
  height: 24px;
  padding-left: 11px;
  font-weight: 400;
  font-size: 11.5px;
  line-height: 24px;
  color: #3f5fb0;
  border-radius: 4px;
  background: linear-gradient(#fff, #fff 40%, #e6ebf1);
}
.sp-feature-text {
  margin: 26px 0 0;
  padding-left: 8px;
  font-size: 10.3px;
  line-height: 14px;
  white-space: nowrap;
  color: #111;
}
.sp-footer {
  height: 54px;
  flex: none;
  display: flex;
  align-items: center;
  justify-content: space-between;
  padding: 0 13px 0 14px;
  background: #25589c;
}
.oracle {
  font-family: "Lato", sans-serif;
  font-size: 18px;
  letter-spacing: .6px;
  color: #dbe3ec;
  transform: scaleX(1.42);
  transform-origin: left center;
}
.java-logo {
  display: flex;
  align-items: flex-end;
  gap: 4px;
  color: #eef3f8;
}
.java-word {
  font-family: "Lato", sans-serif;
  font-weight: 400;
  font-size: 23px;
  line-height: 26px;
}
.java-word sup {
  font-size: 5px;
  vertical-align: 12px;
}
.notif-strip {
  height: 13px;
  flex: none;
  margin-top: 5px;
  overflow: hidden;
  background: #ececec;
  padding-left: 3px;
  border-left: 1px solid #a9adb1;
  border-top: 1px solid #b0b0b0;
}
.notif-tab {
  display: flex;
  align-items: flex-start;
  justify-content: space-between;
  width: 90px;
  height: 20px;
  padding: 2px 4px 0 2px;
  font-size: 11px;
  font-weight: 600;
  line-height: 16px;
  background: #fff;
  border-right: 1px solid #a9adb1;
}
.notif-tab .close-x {
  line-height: 16px;
}

/* output */
.output {
  height: 168px;
  flex: none;
  margin-left: 24px;
  display: flex;
  flex-direction: column;
}
.output-head {
  height: 20px;
  flex: none;
  display: flex;
  align-items: center;
  gap: 3px;
  padding-left: 4px;
  font-size: 10.8px;
  background: linear-gradient(#eaf3fc, #d8e8f7);
  border: 1px solid #5ea6d8;
  border-bottom-color: #a9c8e2;
}
.grip {
  width: 2px;
  height: 11px;
  background: repeating-linear-gradient(#555 0 2px, transparent 2px 4px);
}
.output-head-btns {
  margin-left: auto;
  display: flex;
  align-items: center;
  gap: 7px;
  padding-right: 10px;
}
.output-body {
  flex: 1;
  display: flex;
  border-left: 1px solid #a9adb1;
  border-right: 1px solid #a9adb1;
  border-bottom: 1px solid #a9adb1;
  margin-bottom: 3px;
  min-height: 0;
}
.output-actions {
  width: 25px;
  flex: none;
  display: flex;
  flex-direction: column;
  align-items: center;
  gap: 7px;
  padding-top: 4px;
}
.output-main {
  flex: 1;
  min-width: 0;
  display: flex;
  flex-direction: column;
  padding-top: 3px;
}
.out-tabs {
  height: 21px;
  flex: none;
  display: flex;
  align-items: stretch;
}
.out-tab {
  display: flex;
  align-items: center;
  justify-content: space-between;
  width: 452px;
  padding: 0 8px 0 5px;
  font-size: 10.5px;
  background: #ececec;
  border-top: 1px solid #ddd;
  white-space: nowrap;
}
.out-tab-path {
  letter-spacing: -.22px;
}
.out-tab--active {
  width: 221px;
  padding: 0 12px 0 7px;
  font-size: 11px;
  font-weight: 700;
  background: #fff;
}
.close-x--bold {
  color: #222;
  font-weight: 700;
  font-size: 13px;
}
.console {
  flex: 1;
  min-height: 0;
  display: grid;
  grid-template-columns: 1fr 20px;
  grid-template-rows: 1fr 17px;
  background: #fff;
  border-left: 1px solid #d4d4d4;
  border-bottom: 1px solid #d4d4d4;
}
.console-text {
  margin: 0;
  padding: 3px 0 0 17px;
  font-family: "Liberation Mono", monospace;
  font-size: 11.67px;
  line-height: 16px;
  color: #c40000;
  overflow: hidden;
}
.vscroll {
  grid-row: 1 / 3;
  grid-column: 2;
  display: flex;
  flex-direction: column;
  align-items: center;
  justify-content: flex-end;
  padding-bottom: 21px;
}
.vscroll-thumb {
  width: 15px;
  height: 15px;
  margin-bottom: 4px;
  background: #c8c8c8;
}
.hscroll {
  display: flex;
  align-items: center;
  padding: 0 4px 0 21px;
  gap: 5px;
  background: linear-gradient(90deg, #fff 15px, #f0f0f0 15px);
}
.hscroll-track {
  flex: 1;
  height: 100%;
  background: #f0f0f0;
}
.hscroll-thumb {
  display: block;
  width: 1193px;
  height: 100%;
  background: #c8c8c8;
}

/* status */
.status-bar {
  height: 22px;
  flex: none;
  display: flex;
  align-items: center;
  padding: 1px 0 2px 6px;
  font-size: 10.1px;
  background: #efefef;
}
.status-restore {
  margin-right: 5px;
}
.dock-btn {
  height: 19px;
  display: flex;
  align-items: center;
  gap: 3px;
  padding: 0 4px;
  margin-right: 2px;
}
.dock-btn--on {
  width: 64px;
  background: #cfe4f6;
  border: 1px solid #8ec1ea;
}
.dock-btn--plain {
  margin-left: 5px;
}
.status-right {
  margin-left: auto;
  display: flex;
  align-items: center;
  height: 100%;
}
.task-name {
  margin-right: 6px;
  font-size: 10.3px;
}
.progress {
  width: 200px;
  height: 14px;
  display: flex;
  padding: 2px 0 2px 136px;
  background: #e4e4e4;
  border: 1px solid #a9a9a9;
}
.progress i {
  width: 6px;
}
.p1 {
  background: #c3e6cf;
}
.p2 {
  background: #7ed39a;
}
.p3 {
  background: #22b150;
}
.progress-stop {
  width: 11px;
  height: 11px;
  margin: 0 21px 0 6px;
  border: 1px solid #555;
  background: repeating-linear-gradient(45deg, #888 0 1px, #eee 1px 2px);
}
.bubble {
  margin-right: 4px;
}
.bubble-num {
  font-family: "Liberation Serif", serif;
  font-weight: 700;
  font-size: 9px;
  fill: #111;
}
.status-sep {
  width: 1px;
  height: 15px;
  background: #aaa;
}
.status-sep--ins {
  margin-left: 110px;
}
.ins {
  width: 22px;
  padding-left: 3px;
  font-size: 10.3px;
}

/* taskbar */
.taskbar {
  flex: 1;
  display: flex;
  align-items: center;
  background: #0d0d0d;
  color: #fff;
}
.tk-start {
  margin-left: 10px;
}
.tk-cortana {
  margin-left: 19px;
}
.tk-view {
  margin-left: 18px;
}
.tk-app {
  width: 28px;
  height: 100%;
  display: flex;
  align-items: center;
  justify-content: center;
}
.tk-app--run {
  border-bottom: 2px solid #76b9ed;
}
.tk-app--explorer {
  margin-left: 15px;
}
.tk-app--chrome {
  margin-left: 9px;
}
.tk-app--cube {
  margin-left: 10px;
}
.tk-app--xampp {
  margin-left: 8px;
}
.tk-app--active {
  width: 36px;
  margin-left: 5px;
  background: #333;
  border-bottom: 2px solid #76b9ed;
}
.tray {
  margin-left: auto;
  display: flex;
  align-items: center;
  gap: 9px;
  padding-right: 22px;
}
.tray-time {
  margin-left: 12px;
  font-size: 11.6px;
  color: #eee;
}
.tray-note {
  margin-left: 9px;
}

/* fx window */
.dialog {
  position: absolute;
  left: 359px;
  top: 134px;
  width: 649px;
  height: 328px;
  display: flex;
  flex-direction: column;
  background: #f4f4f4;
  border: 1px solid #1a7fd0;
  box-shadow: 0 6px 24px rgba(0, 0, 0, .45);
}
.dlg-title {
  height: 30px;
  flex: none;
  display: flex;
  align-items: center;
  padding: 0 0 2px 8px;
  background: #fff;
}
.dlg-title-text {
  margin-left: 5px;
  font-size: 12px;
  color: #111;
}
.dlg-controls {
  margin-left: auto;
  display: flex;
  gap: 35px;
  padding-right: 17px;
}
.dlg-banner {
  height: 46px;
  flex: none;
  margin: 0;
  padding-left: 42px;
  text-align: center;
  font-size: 24px;
  line-height: 46px;
  font-weight: 700;
  font-style: italic;
  color: #2b2b2b;
  background: #0ff;
}
.dlg-sub {
  height: 53px;
  flex: none;
  margin: 0;
  text-align: center;
  font-size: 13.1px;
  font-weight: 700;
  line-height: 48px;
  color: #333;
}
.tv {
  height: 162px;
  flex: none;
  margin: 0 4px 0 5px;
  overflow: hidden;
  border: 1px solid #2aa0d4;
  padding: 1px 1px 0;
  background: #fff;
}
.tv-row {
  display: grid;
  grid-template-columns: 50px 50px 50px 50px 50px 57px 66px 62px 39px 37px 57px 66px;
}
.tv-row span {
  border-right: 1px solid #e9e9e9;
}
.tv-head {
  height: 23px;
  font-size: 11.4px;
  font-weight: 700;
  color: #333;
  background: linear-gradient(#f0f0f0, #d6d6d6);
  border-bottom: 1px solid #c8c8c8;
}
.tv-head span {
  text-align: center;
  line-height: 22px;
  border-right: 1px solid #fafafa;
  box-shadow: inset -1px 0 0 #c4c4c4;
}
.tv-data {
  height: 24px;
  font-size: 12px;
  color: #333;
  border-bottom: 1px solid #ececec;
}
.tv-data span {
  padding-left: 4px;
  line-height: 22px;
}
.tv-focus {
  outline: 1px solid #2aa0d4;
  outline-offset: -2px;
  height: 24px;
}
.tv-odd {
  background: #f9f9f9;
}
.tv-stub {
  height: 3px;
  border-bottom: 0;
}
.tv-scroll {
  height: 15px;
  display: flex;
  align-items: center;
  gap: 4px;
  padding: 0 3px;
  background: #e8e8e8;
}
.tv-thumb {
  flex: 1;
  height: 10px;
  border: 1px solid #9a9a9a;
  border-radius: 4px;
  background: linear-gradient(#ececec, #d0d0d0);
}
.dlg-actions {
  flex: 1;
  display: flex;
  justify-content: center;
  padding-top: 9px;
}
.fx-btn {
  width: 69px;
  height: 25px;
  font-family: inherit;
  font-size: 11px;
  color: #333;
  padding: 0;
  border: 1px solid #b0b0b0;
  border-radius: 3px;
  background: linear-gradient(#f2f2f2, #dadada);
}
```
